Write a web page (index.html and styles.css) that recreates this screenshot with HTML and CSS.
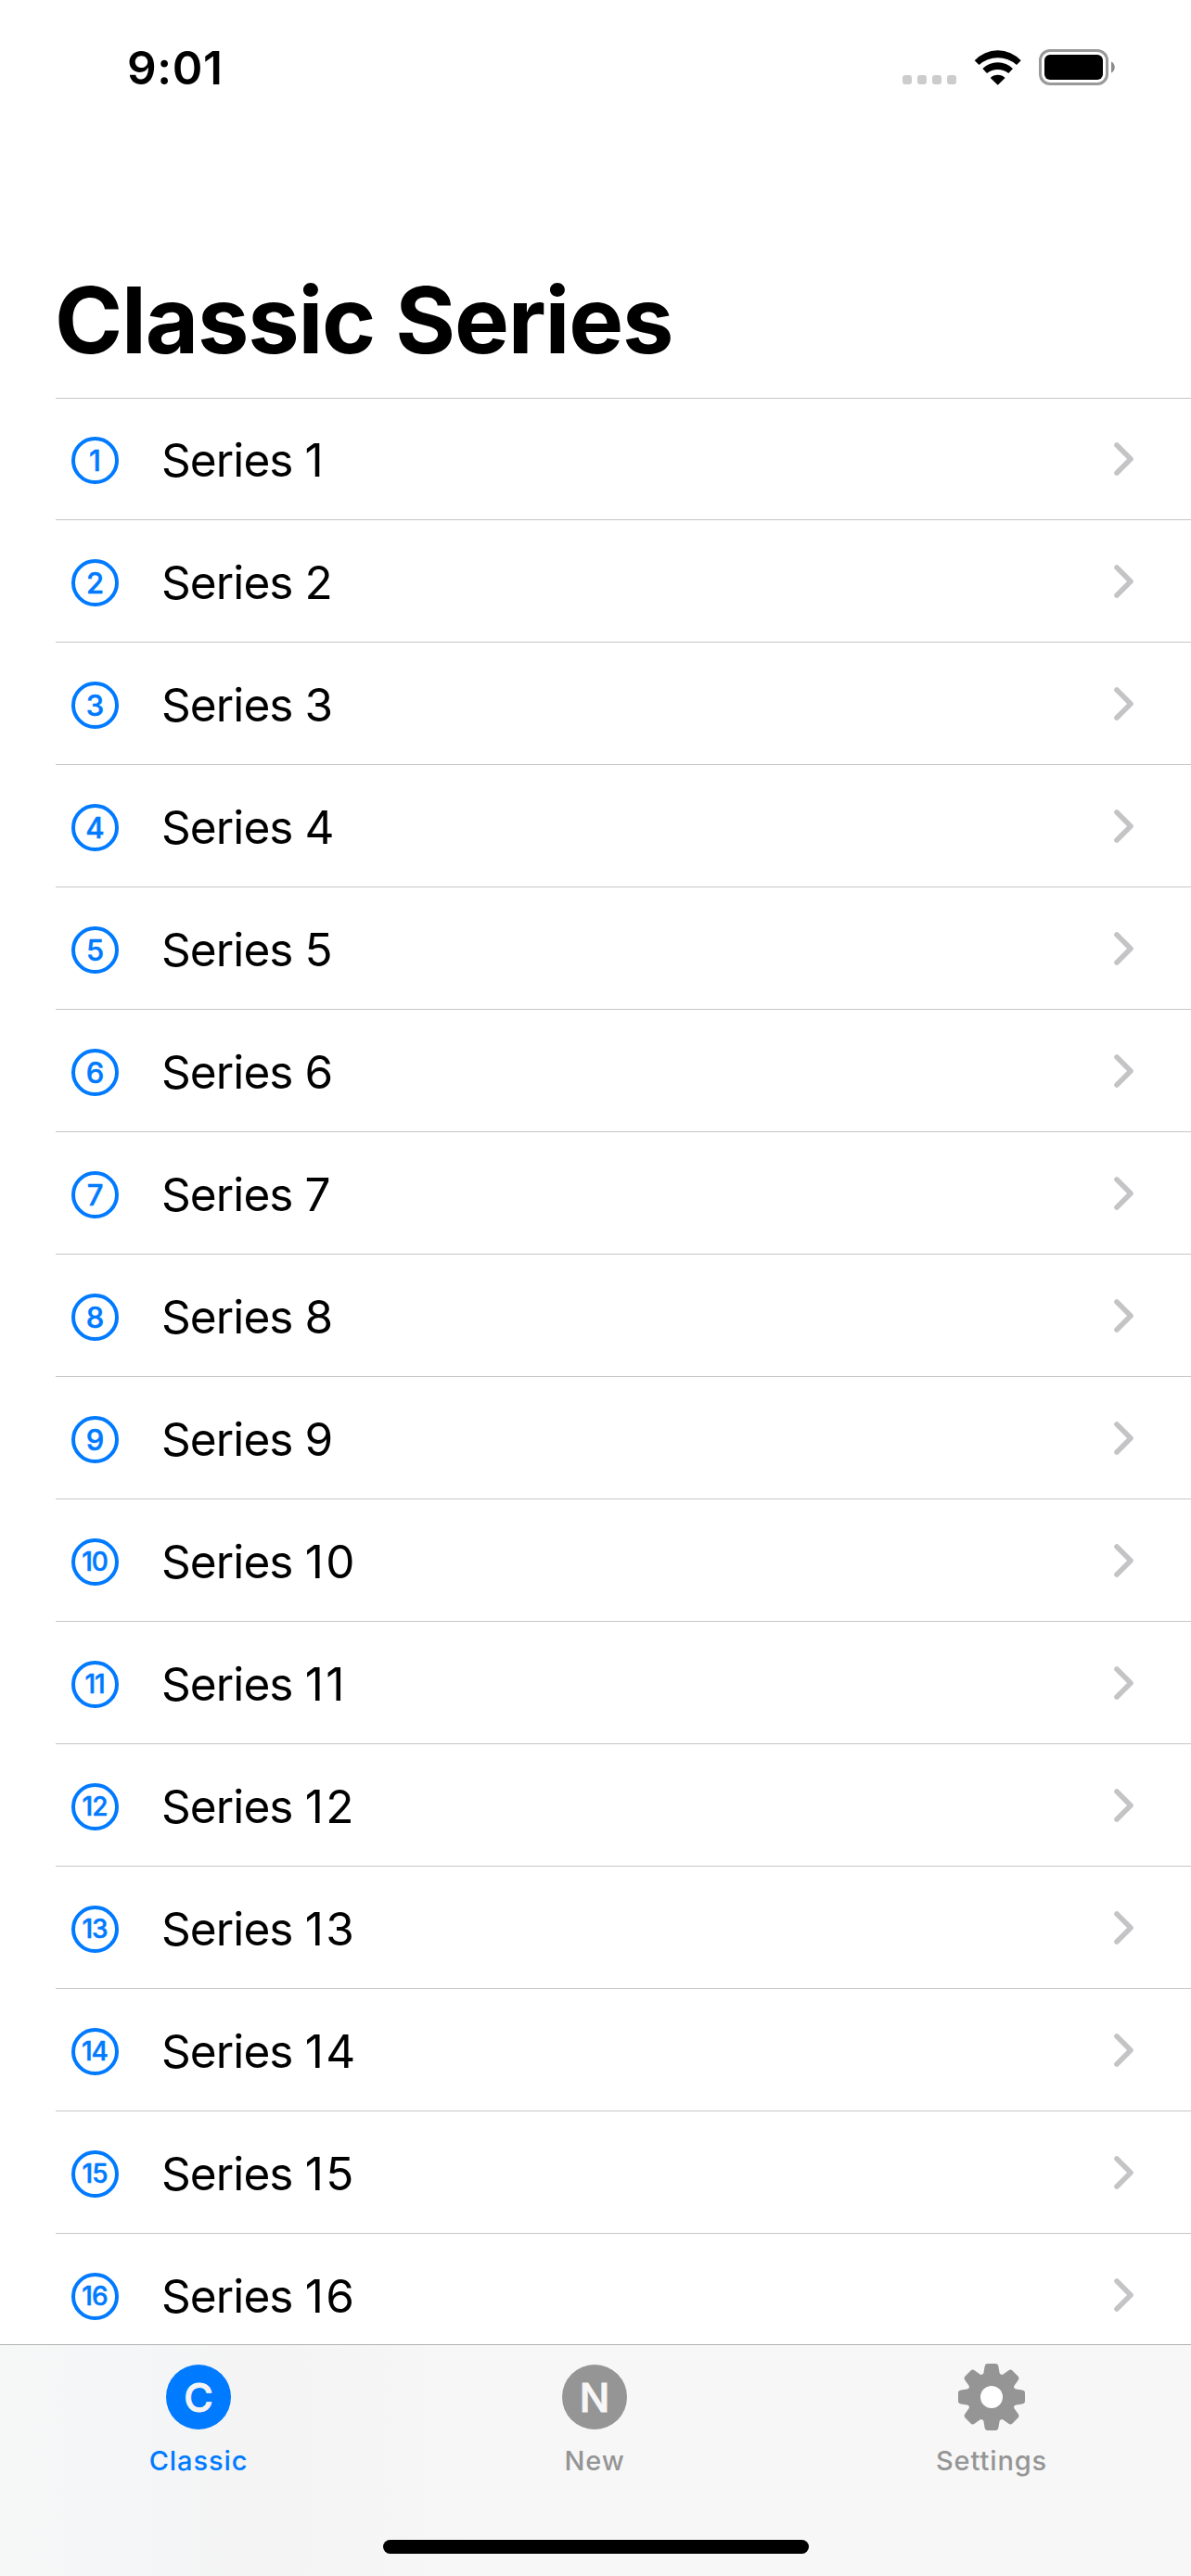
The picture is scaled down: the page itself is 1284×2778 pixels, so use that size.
FILE: index.html
```html
<!DOCTYPE html>
<html lang="en">
<head>
<meta charset="utf-8">
<title>Classic Series</title>
<link rel="stylesheet" href="styles.css">
</head>
<body>
<svg class="defs" aria-hidden="true">
  <symbol id="chevron" viewBox="0 0 21 36"><path d="M3 3 L18 18 L3 33" fill="none" stroke="#c4c4c6" stroke-width="5.6" stroke-linecap="round" stroke-linejoin="round"/></symbol>
</svg>
<div class="screen">
  <header class="status">
    <span class="time">9:01</span>
    <div class="indicators">
      <div class="cell"><i></i><i></i><i></i><i></i></div>
      <svg class="wifi" width="52" height="38" viewBox="0 0 52 38">
        <path d="M.7 11.3A33.9 33.9 0 0 1 50.7 11.3L46 16A30.3 30.3 0 0 0 5.5 16Z"/>
        <path d="M9.3 20A23.2 23.2 0 0 1 42 20L37.3 25A19 19 0 0 0 14 25Z"/>
        <path d="M17.7 30A11.5 11.5 0 0 1 33.6 30L25.7 37.7Z"/>
      </svg>
      <svg class="battery" width="82" height="39" viewBox="0 0 82 39">
        <rect x="1.5" y="1.5" width="72" height="36" rx="10.5" fill="none" stroke="#999" stroke-width="3"/>
        <rect x="6" y="6" width="63" height="27" rx="6"/>
        <path d="M78 13.5C83 15.5 83 23.5 78 25.5Z" fill="#8c8c8c"/>
      </svg>
    </div>
  </header>
  <h1 class="title">Classic Series</h1>
  <ul class="list">
    <li class="row"><span class="badge">1</span><span class="name">Series 1</span><svg class="chevron"><use href="#chevron"/></svg></li>
    <li class="row"><span class="badge">2</span><span class="name">Series 2</span><svg class="chevron"><use href="#chevron"/></svg></li>
    <li class="row"><span class="badge">3</span><span class="name">Series 3</span><svg class="chevron"><use href="#chevron"/></svg></li>
    <li class="row"><span class="badge">4</span><span class="name">Series 4</span><svg class="chevron"><use href="#chevron"/></svg></li>
    <li class="row"><span class="badge">5</span><span class="name">Series 5</span><svg class="chevron"><use href="#chevron"/></svg></li>
    <li class="row"><span class="badge">6</span><span class="name">Series 6</span><svg class="chevron"><use href="#chevron"/></svg></li>
    <li class="row"><span class="badge">7</span><span class="name">Series 7</span><svg class="chevron"><use href="#chevron"/></svg></li>
    <li class="row"><span class="badge">8</span><span class="name">Series 8</span><svg class="chevron"><use href="#chevron"/></svg></li>
    <li class="row"><span class="badge">9</span><span class="name">Series 9</span><svg class="chevron"><use href="#chevron"/></svg></li>
    <li class="row"><span class="badge wide">10</span><span class="name">Series <span class="num">10</span></span><svg class="chevron"><use href="#chevron"/></svg></li>
    <li class="row"><span class="badge wide">11</span><span class="name">Series <span class="num">11</span></span><svg class="chevron"><use href="#chevron"/></svg></li>
    <li class="row"><span class="badge wide">12</span><span class="name">Series <span class="num">12</span></span><svg class="chevron"><use href="#chevron"/></svg></li>
    <li class="row"><span class="badge wide">13</span><span class="name">Series <span class="num">13</span></span><svg class="chevron"><use href="#chevron"/></svg></li>
    <li class="row"><span class="badge wide">14</span><span class="name">Series <span class="num">14</span></span><svg class="chevron"><use href="#chevron"/></svg></li>
    <li class="row"><span class="badge wide">15</span><span class="name">Series <span class="num">15</span></span><svg class="chevron"><use href="#chevron"/></svg></li>
    <li class="row"><span class="badge wide">16</span><span class="name">Series <span class="num">16</span></span><svg class="chevron"><use href="#chevron"/></svg></li>
  </ul>
  <footer class="tabbar">
    <nav class="tabs">
      <a class="tab active"><span class="disc">C</span><span class="label">Classic</span></a>
      <a class="tab"><span class="disc">N</span><span class="label">New</span></a>
      <a class="tab">
        <svg class="gear" viewBox="-36 -36 72 72">
          <defs><path id="tooth" d="M-10.5 -22L-9.2 -24.8Q-8.7 -25.6 -8.5 -26.6L-7.4 -33Q-6.9 -36 -4.2 -36H4.2Q6.9 -36 7.4 -33L8.5 -26.6Q8.7 -25.6 9.2 -24.8L10.5 -22Z"/></defs>
          <circle r="26.4"/>
          <use href="#tooth"/><use href="#tooth" transform="rotate(45)"/><use href="#tooth" transform="rotate(90)"/><use href="#tooth" transform="rotate(135)"/><use href="#tooth" transform="rotate(180)"/><use href="#tooth" transform="rotate(225)"/><use href="#tooth" transform="rotate(270)"/><use href="#tooth" transform="rotate(315)"/>
          <circle r="12" fill="#fff"/>
        </svg>
        <span class="label">Settings</span>
      </a>
    </nav>
    <div class="home"></div>
  </footer>
</div>
</body>
</html>
```
FILE: styles.css
```css
* { box-sizing: border-box; }
body {
  margin: 0;
  background: #fff;
  color: #000;
  font-family: Inter, "Liberation Sans", sans-serif;
}
.defs { display: none; }
.screen {
  display: flex;
  flex-direction: column;
  width: 1284px;
  height: 2778px;
  overflow: hidden;
}
.status {
  flex: none;
  display: flex;
  justify-content: space-between;
  height: 141px;
  padding: 53px 82px 0 137px;
}
.time {
  font-size: 49.5px;
  font-weight: 600;
  line-height: 40px;
  letter-spacing: 0.6px;
}
.indicators { display: flex; align-items: flex-start; }
.cell { display: flex; gap: 6px; margin: 28px 19px 0 0; }
.cell i { width: 10px; height: 10px; border-radius: 3px; background: #ccc; }
.wifi { margin: 1px 18px 0 0; }
.title {
  flex: none;
  height: 288px;
  margin: 0;
  padding: 144px 0 0 59px;
  font-size: 99px;
  font-weight: 700;
  line-height: 120px;
  letter-spacing: -1.2px;
  white-space: nowrap;
}
.list {
  flex: 1;
  min-height: 0;
  margin: 0;
  padding: 0 0 0 60px;
  overflow: hidden;
  list-style: none;
}
.row {
  display: flex;
  align-items: center;
  height: 132px;
  padding: 4px 62px 0 17px;
  border-top: 1px solid #c6c6c8;
}
.row:first-child { height: 131px; padding-top: 3px; }
.badge {
  width: 51px;
  height: 51px;
  border: 4px solid #007aff;
  border-radius: 50%;
  color: #007aff;
  font-size: 31px;
  font-weight: 500;
  line-height: 43px;
  text-align: center;
  -webkit-text-stroke: 0.5px #007aff;
}
.badge.wide { font-size: 28px; letter-spacing: -1px; text-indent: -1px; }
.name {
  flex: 1;
  margin-left: 46px;
  font-size: 49.5px;
  line-height: 127px;
  letter-spacing: -0.9px;
}
.num { letter-spacing: 2.4px; }
.chevron { width: 21px; height: 36px; margin-bottom: 3px; }
.tabbar {
  flex: none;
  display: flex;
  flex-direction: column;
  align-items: center;
  height: 250px;
  border-top: 1px solid #b2b2b2;
  background: linear-gradient(90deg, #f5f8f7 0, #f4f6f7 140px, #f4f4f4 250px, #f5f5f5 400px, #f7f7f7 500px);
}
.tabs {
  display: grid;
  grid-template-columns: 428px 426px 430px;
  width: 100%;
  height: 210px;
}
.tab {
  display: flex;
  flex-direction: column;
  align-items: center;
  padding-top: 21px;
  color: #959595;
}
.tab.active { color: #007aff; }
.disc {
  width: 70px;
  height: 70px;
  border-radius: 50%;
  background: #959595;
  color: #f7f7f7;
  font-size: 43px;
  font-weight: 500;
  line-height: 70px;
  text-align: center;
  -webkit-text-stroke: 1px #f7f7f7;
}
.active .disc { background: #007aff; color: #f4f4f4; }
.gear { width: 72px; height: 72px; margin: -1px 0; fill: #959595; }
.label {
  margin-top: 16px;
  font-size: 29px;
  font-weight: 500;
  line-height: 36px;
  letter-spacing: 0.9px;
}
.home { width: 459px; height: 15px; border-radius: 8px; background: #000; }
```
